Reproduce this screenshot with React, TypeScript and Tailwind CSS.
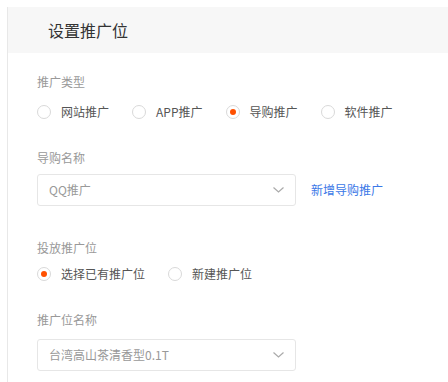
import React from "react";

const font = { fontFamily: '"Noto Sans CJK SC", "Noto Sans", sans-serif' };

function Radio({ label, checked }: { label: string; checked?: boolean }) {
  return (
    <div className="flex items-center gap-[10px]">
      <span className="flex h-[14px] w-[14px] items-center justify-center rounded-full border border-[#d9d9d9] bg-white">
        {checked && <span className="h-[6px] w-[6px] rounded-full bg-[#ff5000]" />}
      </span>
      <span className="text-[12px] leading-[14px] text-[#555]">{label}</span>
    </div>
  );
}

function Select({ value }: { value: string }) {
  return (
    <div className="flex h-[32px] w-[259px] items-center justify-between rounded-[3px] border border-[#e6e6e6] bg-white pl-[11px] pr-[11px]">
      <span className="text-[12px] text-[#999]">{value}</span>
      <svg width="11" height="6" viewBox="0 0 11 6" fill="none">
        <path d="M0.5 0.5 L5.5 5 L10.5 0.5" stroke="#aaa" strokeWidth="1.2" />
      </svg>
    </div>
  );
}

export default function App() {
  return (
    <div className="h-[382px] w-[448px] overflow-hidden bg-white" style={font}>
      <div className="ml-[7px] mt-[7px] h-[375px] border-l border-[#e8e8e8]">
        <div className="flex h-[46px] items-center bg-[#f7f7f7] pl-[40px] text-[16px] text-[#333]">
          设置推广位
        </div>
        <div className="pl-[29px]">
          <div className="mt-[20px] text-[12px] leading-[18px] text-[#999]">推广类型</div>
          <div className="mt-[14px] flex gap-[23px]">
            <Radio label="网站推广" />
            <Radio label="APP推广" />
            <Radio label="导购推广" checked />
            <Radio label="软件推广" />
          </div>
          <div className="mt-[30px] text-[12px] leading-[18px] text-[#999]">导购名称</div>
          <div className="mt-[7px] flex items-center gap-[15px]">
            <Select value="QQ推广" />
            <span className="text-[12px] text-[#3b78e7]">新增导购推广</span>
          </div>
          <div className="mt-[33px] text-[12px] leading-[18px] text-[#999]">投放推广位</div>
          <div className="mt-[10px] flex gap-[23px]">
            <Radio label="选择已有推广位" checked />
            <Radio label="新建推广位" />
          </div>
          <div className="mt-[30px] text-[12px] leading-[18px] text-[#999]">推广位名称</div>
          <div className="mt-[10px]">
            <Select value="台湾高山茶清香型0.1T" />
          </div>
        </div>
      </div>
    </div>
  );
}
